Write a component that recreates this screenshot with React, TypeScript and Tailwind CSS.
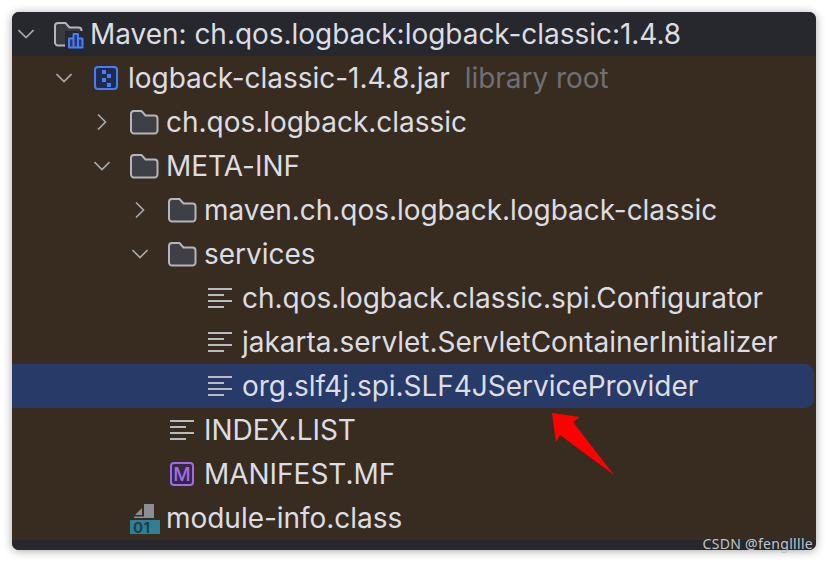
const FolderIcon = ({ fill = "#3f4046" }: { fill?: string }) => (
  <svg width="30" height="30" viewBox="0 0 30 30">
    <path
      d="M5 4H12.5L16.5 8.5H25.5A3 3 0 0 1 28.5 11.5V23.5A3 3 0 0 1 25.5 26.5H5A3 3 0 0 1 2 23.5V7A3 3 0 0 1 5 4Z"
      fill={fill}
      stroke="#b4b6bc"
      strokeWidth="2"
    />
  </svg>
);

const MavenIcon = () => (
  <svg width="30" height="30" viewBox="0 0 30 30" className="overflow-visible">
    <path
      d="M5 4H12.5L16.5 8.5H25.5A3 3 0 0 1 28.5 11.5V23.5A3 3 0 0 1 25.5 26.5H5A3 3 0 0 1 2 23.5V7A3 3 0 0 1 5 4Z"
      fill="#393a40"
      stroke="#b4b6bc"
      strokeWidth="2"
    />
    <rect x="12" y="12" width="19" height="19" fill="#26282d" />
    <path
      d="M16 28.5V19.5H20.5V28.5M20.5 28.5V15H25V28.5M25 28.5V19.5H29.5V28.5H16Z"
      fill="#253a70"
      stroke="#4a7cf6"
      strokeWidth="2"
      strokeLinejoin="round"
    />
  </svg>
);

const JarIcon = () => (
  <svg width="30" height="30" viewBox="0 0 30 30">
    <rect x="4" y="4" width="22" height="22" rx="3" fill="#1f2c50" stroke="#4a7cf6" strokeWidth="2" />
    <rect x="11" y="7" width="4" height="4" fill="#4a7cf6" />
    <rect x="16" y="11" width="4" height="4" fill="#4a7cf6" />
    <rect x="11" y="15" width="4" height="4" fill="#4a7cf6" />
    <rect x="16" y="20" width="4" height="4" fill="#4a7cf6" />
  </svg>
);

const TextFileIcon = () => (
  <svg width="30" height="30" viewBox="0 0 30 30">
    <path d="M3 6H27M3 12H19M3 18H27M3 24H19" stroke="#b9bbc0" strokeWidth="2" />
  </svg>
);

const ManifestIcon = () => (
  <div className="ml-[3px] flex h-6 w-6 items-center justify-center rounded-[4px] border-2 border-[#a06cec] bg-[#35283f] text-[19px] leading-none font-medium text-[#a06cec]">
    M
  </div>
);

const ClassIcon = () => (
  <svg width="30" height="30" viewBox="0 0 30 30" className="overflow-visible">
    <path d="M15 1H25V15H5V13.5H15Z" fill="#8b8e94" />
    <path d="M13 5V12H6Z" fill="#8b8e94" />
    <rect x="1" y="17" width="30" height="14" fill="#2f7f96" />
    <text x="4" y="29.5" fontSize="15" fontWeight="700" fill="#1c3f4d" letterSpacing="0.5">
      01
    </text>
  </svg>
);

const Chevron = ({ open }: { open: boolean }) => (
  <svg width="16" height="16" viewBox="0 0 16 16" fill="none" stroke="#a8aab0" strokeWidth="1.6">
    {open ? <path d="M0.5 4L8 11.5L15.5 4" /> : <path d="M4 0.5L11.5 8L4 15.5" />}
  </svg>
);

type Item = {
  label: string;
  indent: string;
  open?: boolean;
  icon: React.ReactNode;
  note?: string;
  rowClass?: string;
};

const items: Item[] = [
  { label: "Maven: ch.qos.logback:logback-classic:1.4.8", indent: "pl-[6px]", open: true, icon: <MavenIcon />, rowClass: "bg-[#26282d] rounded-t-[7px]" },
  { label: "logback-classic-1.4.8.jar", indent: "pl-[44px]", open: true, icon: <JarIcon />, note: "library root" },
  { label: "ch.qos.logback.classic", indent: "pl-[82px]", open: false, icon: <FolderIcon /> },
  { label: "META-INF", indent: "pl-[82px]", open: true, icon: <FolderIcon /> },
  { label: "maven.ch.qos.logback.logback-classic", indent: "pl-[120px]", open: false, icon: <FolderIcon /> },
  { label: "services", indent: "pl-[120px]", open: true, icon: <FolderIcon /> },
  { label: "ch.qos.logback.classic.spi.Configurator", indent: "pl-[158px]", icon: <TextFileIcon /> },
  { label: "jakarta.servlet.ServletContainerInitializer", indent: "pl-[158px]", icon: <TextFileIcon /> },
  { label: "org.slf4j.spi.SLF4JServiceProvider", indent: "pl-[158px]", icon: <TextFileIcon />, rowClass: "bg-[#273a68] rounded-r-[9px] mr-[2px]" },
  { label: "INDEX.LIST", indent: "pl-[120px]", icon: <TextFileIcon /> },
  { label: "MANIFEST.MF", indent: "pl-[120px]", icon: <ManifestIcon /> },
  { label: "module-info.class", indent: "pl-[82px]", icon: <ClassIcon /> },
];

export default function App() {
  return (
    <div className="h-[562px] w-[828px] bg-white p-3 font-['Inter',sans-serif]">
      <div className="relative flex h-[538px] w-[804px] flex-col rounded-[7px] bg-[#382c20] shadow-[0_1px_10px_rgba(0,0,0,0.35)]">
        {items.map((item) => (
          <div key={item.label} className={`flex h-11 items-center ${item.indent} ${item.rowClass ?? ""}`}>
            <div className="flex w-[35px] shrink-0 items-center">
              {item.open !== undefined && <Chevron open={item.open} />}
            </div>
            <div className="flex w-[37px] shrink-0 items-center">{item.icon}</div>
            <span className="text-[28px] leading-none tracking-[-0.03px] whitespace-nowrap text-[#dcdde2]">
              {item.label}
            </span>
            {item.note && <span className="ml-[15px] text-[28px] leading-none tracking-[-0.03px] text-[#6f7074]">{item.note}</span>}
          </div>
        ))}
        <div className="flex-1 rounded-b-[7px] bg-[#26282d]" />

        <svg className="absolute top-[400px] left-[538px]" width="80" height="80" viewBox="0 0 80 80">
          <path d="M2 1L30 5L23 10L64 63L10 23L6 30Z" fill="#fe0000" />
        </svg>
        <span className="absolute right-[3px] bottom-[-2px] font-['Noto_Sans',sans-serif] text-[14px] leading-[16px] tracking-[0.3px] text-[#c4c4c4]">
          CSDN @fenglllle
        </span>
      </div>
    </div>
  );
}
